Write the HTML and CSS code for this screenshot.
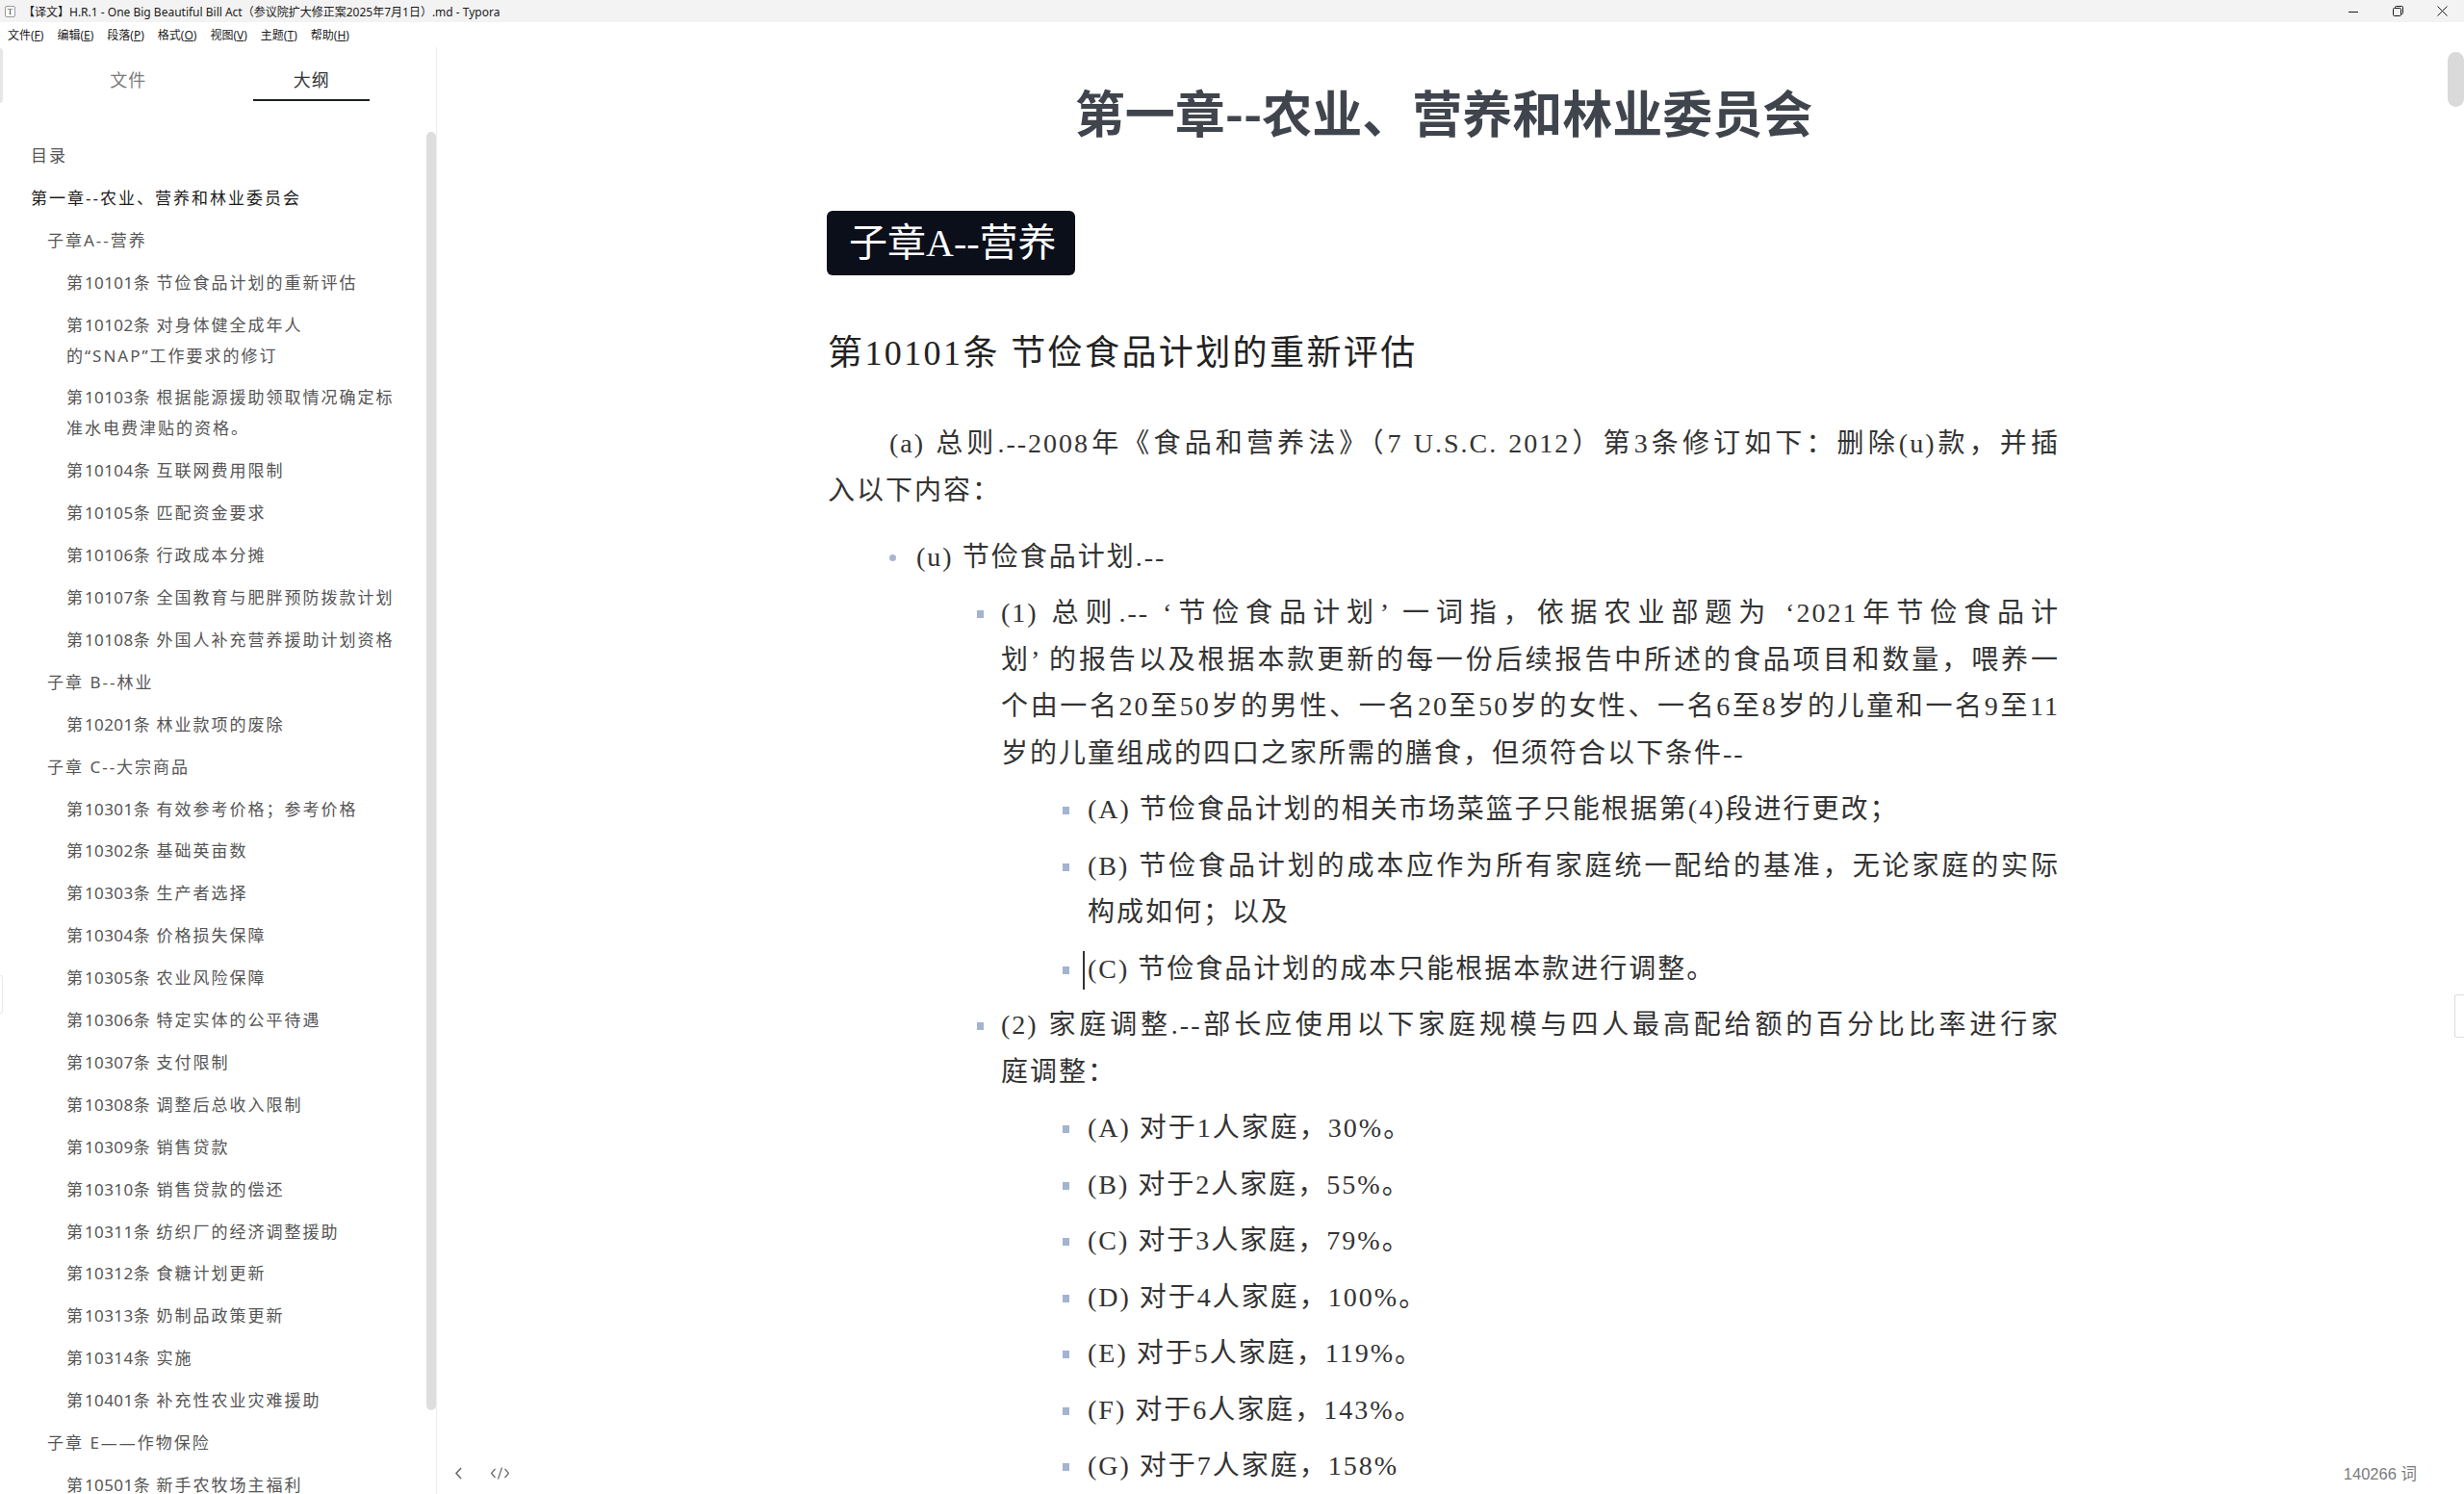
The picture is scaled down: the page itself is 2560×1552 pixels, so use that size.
FILE: index.html
```html
<!DOCTYPE html>
<html lang="zh-CN">
<head>
<meta charset="utf-8">
<title>Typora</title>
<link rel="stylesheet" href="styles.css">
</head>
<body>
<div class="window">
  <header class="titlebar">
    <div class="app-icon">T</div>
    <div class="title">【译文】H.R.1 - One Big Beautiful Bill Act（参议院扩大修正案2025年7月1日）.md - Typora</div>
    <div class="controls">
      <div class="ctl"><svg width="10" height="10" viewBox="0 0 10 10"><path d="M0 5.5H10" stroke="#1a1a1a" stroke-width="1"/></svg></div>
      <div class="ctl"><svg width="11" height="11" viewBox="0 0 11 11"><rect x="0.5" y="2.5" width="8" height="8" rx="1" fill="none" stroke="#1a1a1a"/><path d="M2.5 2.5V1.5Q2.5 0.5 3.5 0.5H9.5Q10.5 0.5 10.5 1.5V7.5Q10.5 8.5 9.5 8.5H8.5" fill="none" stroke="#1a1a1a"/></svg></div>
      <div class="ctl"><svg width="11" height="11" viewBox="0 0 11 11"><path d="M0.5 0.5L10.5 10.5M10.5 0.5L0.5 10.5" stroke="#1a1a1a" stroke-width="1"/></svg></div>
    </div>
  </header>
  <nav class="menubar">
    <span class="menu">文件(<u>F</u>)</span>
    <span class="menu">编辑(<u>E</u>)</span>
    <span class="menu">段落(<u>P</u>)</span>
    <span class="menu">格式(<u>O</u>)</span>
    <span class="menu">视图(<u>V</u>)</span>
    <span class="menu">主题(<u>T</u>)</span>
    <span class="menu">帮助(<u>H</u>)</span>
  </nav>
  <div class="workspace">
    <aside class="sidebar">
      <div class="edge-tab"></div>
      <div class="edge-tab lower"></div>
      <div class="tabs">
        <div class="tab">文件</div>
        <div class="tab active"><span>大纲</span></div>
      </div>
      <ul class="outline">
        <li class="l0">目录</li>
        <li class="l0 cur">第一章--农业、营养和林业委员会</li>
        <li class="l1">子章A--营养</li>
        <li class="l2">第<span class="n">10101</span>条<span class="n"> </span>节俭食品计划的重新评估</li>
        <li class="l2">第<span class="n">10102</span>条<span class="n"> </span>对身体健全成年人<span class="nw">的“SNAP”工作要求的修订</span></li>
        <li class="l2">第<span class="n">10103</span>条<span class="n"> </span>根据能源援助领取情况确定标准水电费津贴的资格。</li>
        <li class="l2">第<span class="n">10104</span>条<span class="n"> </span>互联网费用限制</li>
        <li class="l2">第<span class="n">10105</span>条<span class="n"> </span>匹配资金要求</li>
        <li class="l2">第<span class="n">10106</span>条<span class="n"> </span>行政成本分摊</li>
        <li class="l2">第<span class="n">10107</span>条<span class="n"> </span>全国教育与肥胖预防拨款计划</li>
        <li class="l2">第<span class="n">10108</span>条<span class="n"> </span>外国人补充营养援助计划资格</li>
        <li class="l1">子章 B--林业</li>
        <li class="l2">第<span class="n">10201</span>条<span class="n"> </span>林业款项的废除</li>
        <li class="l1">子章 C--大宗商品</li>
        <li class="l2">第<span class="n">10301</span>条<span class="n"> </span>有效参考价格；参考价格</li>
        <li class="l2">第<span class="n">10302</span>条<span class="n"> </span>基础英亩数</li>
        <li class="l2">第<span class="n">10303</span>条<span class="n"> </span>生产者选择</li>
        <li class="l2">第<span class="n">10304</span>条<span class="n"> </span>价格损失保障</li>
        <li class="l2">第<span class="n">10305</span>条<span class="n"> </span>农业风险保障</li>
        <li class="l2">第<span class="n">10306</span>条<span class="n"> </span>特定实体的公平待遇</li>
        <li class="l2">第<span class="n">10307</span>条<span class="n"> </span>支付限制</li>
        <li class="l2">第<span class="n">10308</span>条<span class="n"> </span>调整后总收入限制</li>
        <li class="l2">第<span class="n">10309</span>条<span class="n"> </span>销售贷款</li>
        <li class="l2">第<span class="n">10310</span>条<span class="n"> </span>销售贷款的偿还</li>
        <li class="l2">第<span class="n">10311</span>条<span class="n"> </span>纺织厂的经济调整援助</li>
        <li class="l2">第<span class="n">10312</span>条<span class="n"> </span>食糖计划更新</li>
        <li class="l2">第<span class="n">10313</span>条<span class="n"> </span>奶制品政策更新</li>
        <li class="l2">第<span class="n">10314</span>条<span class="n"> </span>实施</li>
        <li class="l2">第<span class="n">10401</span>条<span class="n"> </span>补充性农业灾难援助</li>
        <li class="l1">子章 E——作物保险</li>
        <li class="l2">第<span class="n">10501</span>条<span class="n"> </span>新手农牧场主福利</li>
      </ul>
      <div class="sb-thumb"></div>
    </aside>
    <main class="editor">
      <article class="doc">
        <h1>第一章--农业、营养和林业委员会</h1>
        <h2>子章A--营养</h2>
        <h3>第10101条 节俭食品计划的重新评估</h3>
        <p class="para">
          <span class="ln first">(a) 总则.--2008年《食品和营养法》（7 U.S.C. 2012）第3条修订如下：删除(u)款，并插</span>
          <span class="ln last">入以下内容：</span>
        </p>
        <ul class="lv1">
          <li>(u) 节俭食品计划.--
            <ul class="lv2">
              <li>
                <span class="ln">(1) 总则.-- ‘节俭食品计划’ 一词指，依据农业部题为 ‘2021年节俭食品计</span>
                <span class="ln">划’ 的报告以及根据本款更新的每一份后续报告中所述的食品项目和数量，喂养一</span>
                <span class="ln">个由一名20至50岁的男性、一名20至50岁的女性、一名6至8岁的儿童和一名9至11</span>
                <span class="ln last">岁的儿童组成的四口之家所需的膳食，但须符合以下条件--</span>
                <ul class="lv3">
                  <li>(A) 节俭食品计划的相关市场菜篮子只能根据第(4)段进行更改；</li>
                  <li>
                    <span class="ln">(B) 节俭食品计划的成本应作为所有家庭统一配给的基准，无论家庭的实际</span>
                    <span class="ln last">构成如何；以及</span>
                  </li>
                  <li><span class="caret"></span>(C) 节俭食品计划的成本只能根据本款进行调整。</li>
                </ul>
              </li>
              <li>
                <span class="ln">(2) 家庭调整.--部长应使用以下家庭规模与四人最高配给额的百分比比率进行家</span>
                <span class="ln last">庭调整：</span>
                <ul class="lv3">
                  <li>(A) 对于1人家庭，30%。</li>
                  <li>(B) 对于2人家庭，55%。</li>
                  <li>(C) 对于3人家庭，79%。</li>
                  <li>(D) 对于4人家庭，100%。</li>
                  <li>(E) 对于5人家庭，119%。</li>
                  <li>(F) 对于6人家庭，143%。</li>
                  <li>(G) 对于7人家庭，158%</li>
                </ul>
              </li>
            </ul>
          </li>
        </ul>
      </article>
      <div class="scroll-thumb"></div>
      <div class="edge-marker"></div>
      <footer class="footer">
        <span class="f-back"><svg width="9" height="13" viewBox="0 0 9 13"><path d="M7 1L2 6.5L7 12" fill="none" stroke="#666" stroke-width="1.5"/></svg></span>
        <span class="f-code"><svg width="21" height="13" viewBox="0 0 21 13"><path d="M5.5 2L1.5 6.5L5.5 11M15.5 2L19.5 6.5L15.5 11M12.5 0.5L8.5 12.5" fill="none" stroke="#666" stroke-width="1.2"/></svg></span>
        <span class="wordcount">140266 词</span>
      </footer>
    </main>
  </div>
</div>
</body>
</html>
```
FILE: styles.css
```css
* { box-sizing: border-box; }
html, body { margin: 0; padding: 0; }
body {
  width: 2560px;
  height: 1552px;
  overflow: hidden;
  background: #fff;
  font-family: "Noto Sans", "Noto Sans CJK SC", sans-serif;
  color: #333;
}
.window { display: flex; flex-direction: column; height: 1552px; }

/* title bar */
.titlebar {
  flex: none;
  height: 23px;
  background: #f3f3f3;
  display: flex;
  align-items: center;
}
.app-icon {
  width: 11px;
  height: 12px;
  margin-left: 5px;
  border: 1px solid #9a9a9a;
  border-radius: 2px;
  background: #fff;
  font: 9px/10px "Liberation Serif", serif;
  text-align: center;
  color: #333;
}
.title {
  margin-left: 8px;
  font-size: 12px;
  color: #1a1a1a;
  white-space: nowrap;
}
.controls { margin-left: auto; display: flex; height: 100%; }
.ctl { width: 46px; display: flex; align-items: center; justify-content: center; }

/* menu */
.menubar {
  flex: none;
  height: 26px;
  display: flex;
  align-items: center;
  gap: 14px;
  padding-left: 8px;
  font-size: 12px;
  color: #1a1a1a;
}
.menu u { text-underline-offset: 1px; }

.workspace { flex: 1; display: flex; min-height: 0; }

/* sidebar */
.sidebar {
  flex: none;
  width: 454px;
  border-right: 1px solid #ececec;
  position: relative;
  overflow: hidden;
}
.edge-tab {
  position: absolute;
  left: 0;
  top: 1px;
  width: 3px;
  height: 57px;
  background: #e6e6e6;
  border-radius: 0 3px 3px 0;
}
.edge-tab.lower {
  top: 964px;
  height: 40px;
  background: none;
  border: 1px solid #e8e8e8;
  border-left: none;
}
.tabs {
  display: flex;
  padding: 0 34px 0 38px;
}
.tab {
  flex: 1;
  text-align: center;
  padding-top: 22px;
  font-size: 18px;
  line-height: 24px;
  letter-spacing: 1px;
  color: #7a7a7a;
}
.tab.active { color: #333; }
.tab.active span {
  display: inline-block;
  width: 121px;
  padding-bottom: 8px;
  border-bottom: 2px solid #1c1f26;
}
.outline {
  list-style: none;
  margin: 35px 0 0;
  padding: 0 26px 0 0;
  font-size: 17px;
  line-height: 31.9px;
  letter-spacing: 2px;
  color: #555;
}
.outline li { padding: 6px 0; }
.outline .l0 { padding-left: 32px; }
.outline .l1 { padding-left: 49px; }
.outline .l2 { padding-left: 69px; }
.outline .cur { color: #1d1d1d; }
.outline .n { letter-spacing: 0.4px; }
.nw { white-space: nowrap; }
.sb-thumb {
  position: absolute;
  right: 0;
  top: 88px;
  width: 10px;
  height: 1328px;
  background: #dedede;
  border-radius: 5px;
}

/* editor */
.editor {
  flex: 1;
  position: relative;
  overflow: hidden;
  padding-right: 14px;
}
.doc {
  width: 1280px;
  margin: 0 auto;
  font-family: "Liberation Serif", "Noto Sans CJK SC", serif;
  font-size: 28px;
  line-height: 48.5px;
  letter-spacing: 2px;
  color: #333;
}
.doc h1 {
  margin: 32px 0 0;
  font: 700 52px/70px "Noto Sans CJK SC", sans-serif;
  letter-spacing: 0;
  color: #40454d;
  text-align: center;
}
.doc h2 {
  width: fit-content;
  height: 67px;
  margin: 68px 0 0 -1px;
  padding: 0 19px 0 23px;
  background: #0b0f1a;
  border-radius: 6px;
  color: #fff;
  font-weight: 400;
  font-size: 40px;
  line-height: 67px;
  letter-spacing: 0;
}
.doc h3 {
  margin: 56px 0 0;
  font-weight: 400;
  font-size: 36px;
  line-height: 50px;
  letter-spacing: 2.4px;
  color: #222;
}
.para { margin: 43.5px 0 0; line-height: 49px; }
.ln { display: block; text-align: justify; text-align-last: justify; }
.ln.last { text-align-last: auto; }
.ln.first { padding-left: 64px; }

.doc ul { list-style: none; margin: 0; padding: 0; }
.doc .lv1 { margin-top: 21px; padding-left: 92px; }
.doc .lv2 { padding-left: 88px; margin-top: 1px; margin-bottom: 2px; }
.doc .lv3 { padding-left: 90px; margin-top: 7px; margin-bottom: 0; }
.doc li { position: relative; }
.lv2 > li, .lv3 > li { margin-top: 10px; }
.lv1 > li::before {
  content: "";
  position: absolute;
  left: -28px;
  top: 21px;
  width: 7px;
  height: 7px;
  border-radius: 50%;
  background: #a9b6d0;
}
.lv2 > li::before, .lv3 > li::before {
  content: "";
  position: absolute;
  top: 21px;
  width: 7px;
  height: 8px;
  background: #a3b3d0;
}
.lv2 > li::before { left: -25px; }
.lv3 > li::before { left: -26px; }
.caret {
  position: absolute;
  left: -5px;
  top: 5px;
  width: 1.5px;
  height: 40px;
  background: #333;
}

.scroll-thumb {
  position: absolute;
  right: 0;
  top: 5px;
  width: 17px;
  height: 57px;
  background: #dadada;
  border-radius: 9px;
}
.edge-marker {
  position: absolute;
  right: 0;
  top: 984px;
  width: 10px;
  height: 45px;
  border: 1px solid #dcdcdc;
  border-right: none;
  border-radius: 3px 0 0 3px;
}
.footer {
  position: absolute;
  left: 0;
  right: 0;
  bottom: 0;
  height: 44px;
}
.f-back { position: absolute; left: 18px; bottom: 15px; display: flex; }
.f-code { position: absolute; left: 55px; bottom: 15px; display: flex; }
.wordcount {
  position: absolute;
  right: 49px;
  bottom: 11px;
  font-family: "Liberation Sans", "Noto Sans CJK SC", sans-serif;
  font-size: 16.5px;
  line-height: 20px;
  color: #7b7b7b;
}
```
